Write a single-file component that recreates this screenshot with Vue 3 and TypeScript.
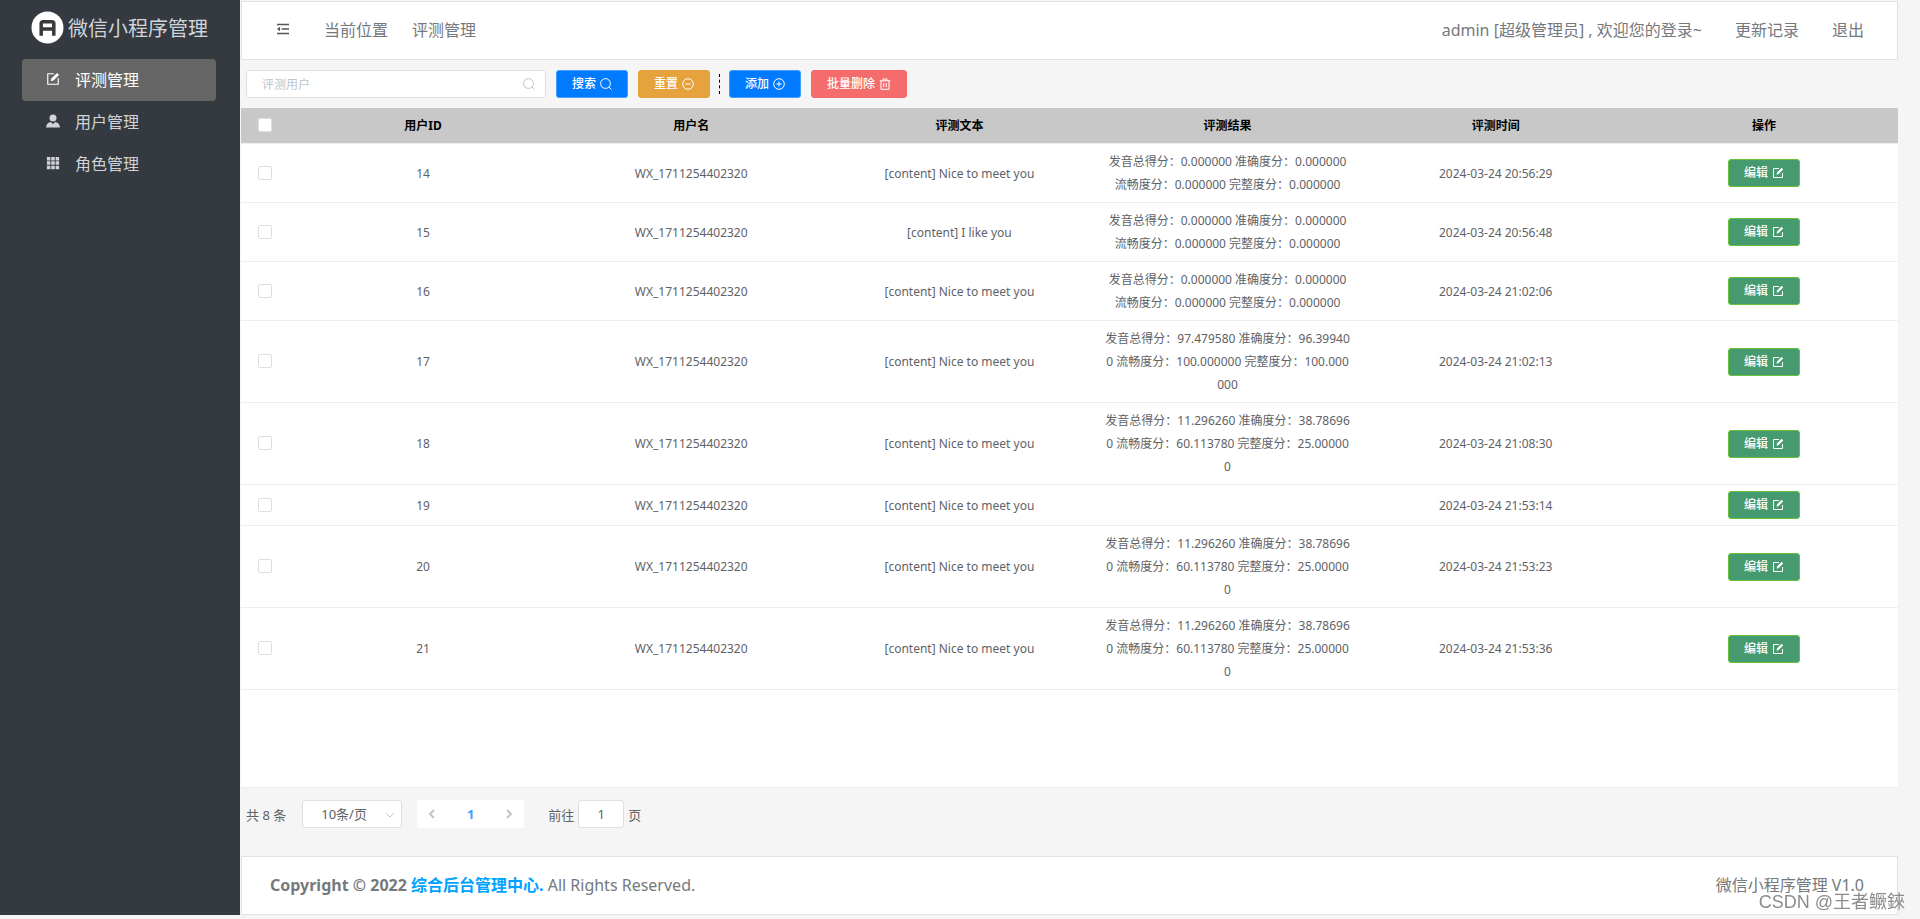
<script setup lang="ts">
import { ref } from 'vue'

interface Row {
  id: number
  text: string
  scores: string[]
  time: string
}

const nice = '[content] Nice to meet you'
const zero = ['0.000000', '0.000000', '0.000000', '0.000000']
const mixed = ['11.296260', '38.786960', '60.113780', '25.000000']

const rows: Row[] = [
  { id: 14, text: nice, scores: zero, time: '2024-03-24 20:56:29' },
  { id: 15, text: '[content] I like you', scores: zero, time: '2024-03-24 20:56:48' },
  { id: 16, text: nice, scores: zero, time: '2024-03-24 21:02:06' },
  { id: 17, text: nice, scores: ['97.479580', '96.399400', '100.000000', '100.000000'], time: '2024-03-24 21:02:13' },
  { id: 18, text: nice, scores: mixed, time: '2024-03-24 21:08:30' },
  { id: 19, text: nice, scores: [], time: '2024-03-24 21:53:14' },
  { id: 20, text: nice, scores: mixed, time: '2024-03-24 21:53:23' },
  { id: 21, text: nice, scores: mixed, time: '2024-03-24 21:53:36' },
]

const labels = ['发音总得分', '准确度分', '流畅度分', '完整度分']
const result = (row: Row): string => row.scores.map((s, i) => `${labels[i]}：${s}`).join(' ')

const columns = ['用户ID', '用户名', '评测文本', '评测结果', '评测时间', '操作']
const menu = [
  { icon: 'edit', label: '评测管理' },
  { icon: 'user', label: '用户管理' },
  { icon: 'grid', label: '角色管理' },
]
const active = ref('评测管理')
const keyword = ref('')
const page = ref('1')
</script>

<template>
  <div class="layout">
    <aside class="sidebar">
      <div class="brand">
        <svg class="logo" viewBox="0 0 34 34" aria-hidden="true">
          <circle cx="17" cy="17" r="16.5" fill="#fff" />
          <path d="M10.5 25.500V13q0-2 2-2h9q2 0 2 2V25.500M10.500 18.500h13" fill="none" stroke="#3a3a3c" stroke-width="3.600" />
        </svg>
        <span>微信小程序管理</span>
      </div>
      <nav class="menu">
        <a v-for="m in menu" :key="m.label" href="#" :class="{ active: active === m.label }" @click.prevent="active = m.label">
          <svg class="menu-icon" viewBox="0 0 16 16" aria-hidden="true">
            <template v-if="m.icon === 'edit'">
              <path d="M9 2H2v12h12V7" fill="none" stroke="currentColor" stroke-width="1.3" />
              <path d="M5.500 10.500l.6-3L12.600 1l2.300 2.300-6.400 6.500z" fill="currentColor" />
            </template>
            <template v-else-if="m.icon === 'user'">
              <circle cx="8" cy="4.500" r="4" fill="currentColor" />
              <path d="M0 15.500q.2-5 5.200-6.500L8 11.500 10.800 9Q15.800 10.500 16 15.500z" fill="currentColor" />
            </template>
            <path v-else d="M1 1h4v4H1zM6 1h4v4H6zM11 1h4v4h-4zM1 6h4v4H1zM6 6h4v4H6zM11 6h4v4h-4zM1 11h4v4H1zM6 11h4v4H6zM11 11h4v4h-4z" fill="currentColor" />
          </svg>
          <span>{{ m.label }}</span>
        </a>
      </nav>
    </aside>

    <main class="content">
      <header class="topbar">
        <button class="fold" type="button" aria-label="折叠菜单">
          <svg viewBox="0 0 14 14" aria-hidden="true">
            <path d="M1 2.500h12M5.500 7H13M1 11.500h12" fill="none" stroke="currentColor" stroke-width="1.600" />
            <path d="M1 7l3-2.200v4.400z" fill="currentColor" />
          </svg>
        </button>
        <a href="#">当前位置</a>
        <a href="#">评测管理</a>
        <div class="account">
          <span>admin [超级管理员] , 欢迎您的登录~</span>
          <a href="#">更新记录</a>
          <a href="#">退出</a>
        </div>
      </header>

      <form class="tools" @submit.prevent>
        <div class="search">
          <input v-model="keyword" type="text" placeholder="评测用户" aria-label="评测用户" />
          <svg class="icon" viewBox="0 0 12 12" aria-hidden="true"><circle cx="5.500" cy="5.500" r="4.900" /><path d="M9 9l2.500 2.500" /></svg>
        </div>
        <button type="submit" class="btn primary">搜索<svg class="icon" viewBox="0 0 12 12" aria-hidden="true"><circle cx="5.500" cy="5.500" r="4.900" /><path d="M9 9l2.500 2.500" /></svg></button>
        <button type="button" class="btn warning">重置<svg class="icon" viewBox="0 0 12 12" aria-hidden="true"><circle cx="6" cy="6" r="5.300" /><path d="M3.500 6h5" /></svg></button>
        <span class="divider"></span>
        <button type="button" class="btn primary">添加<svg class="icon" viewBox="0 0 12 12" aria-hidden="true"><circle cx="6" cy="6" r="5.300" /><path d="M3.500 6h5M6 3.500v5" /></svg></button>
        <button type="button" class="btn danger">批量删除<svg class="icon" viewBox="0 0 12 12" aria-hidden="true"><path d="M.7 2.800h10.600M4 2.800V1h4v1.800M2 2.800v8.500h8V2.800M4.700 5v4M7.300 5v4" /></svg></button>
      </form>

      <div class="table-wrap">
        <table>
          <colgroup>
            <col class="check-col" />
            <col v-for="c in columns" :key="c" />
          </colgroup>
          <thead>
            <tr>
              <th><input type="checkbox" aria-label="全选" /></th>
              <th v-for="c in columns" :key="c" scope="col">{{ c }}</th>
            </tr>
          </thead>
          <tbody>
            <tr v-for="row in rows" :key="row.id">
              <td><input type="checkbox" :aria-label="`选择 ${row.id}`" /></td>
              <td>{{ row.id }}</td>
              <td>WX_1711254402320</td>
              <td>{{ row.text }}</td>
              <td>{{ result(row) }}</td>
              <td>{{ row.time }}</td>
              <td>
                <button type="button" class="btn success">编辑<svg class="icon" viewBox="0 0 12 12" aria-hidden="true"><path d="M7 1.500H1.500v9h9V6" /><path class="solid" d="M4.500 7.700L5 5.500 9.600.8l1.600 1.600-4.600 4.700z" /></svg></button>
              </td>
            </tr>
          </tbody>
        </table>
      </div>

      <div class="pagination">
        <span class="total">共 8 条</span>
        <div class="size">
          <select aria-label="每页条数">
            <option>10条/页</option>
            <option>20条/页</option>
          </select>
          <svg viewBox="0 0 10 10" aria-hidden="true"><path d="M1 3l4 4 4-4" /></svg>
        </div>
        <div class="pager">
          <button type="button" aria-label="上一页" disabled><svg viewBox="0 0 10 10" aria-hidden="true"><path d="M7 1L3 5l4 4" /></svg></button>
          <button type="button" class="current">1</button>
          <button type="button" aria-label="下一页" disabled><svg viewBox="0 0 10 10" aria-hidden="true"><path d="M3 1l4 4-4 4" /></svg></button>
        </div>
        <label class="jump">前往<input v-model="page" type="text" />页</label>
      </div>

      <footer class="footer">
        <span><strong>Copyright © 2022 <a href="#">综合后台管理中心.</a></strong> All Rights Reserved.</span>
        <span>微信小程序管理 V1.0</span>
      </footer>
    </main>

    <div class="watermark">CSDN @王者鳜錸</div>
  </div>
</template>

<style>
body {
  margin: 0;
  background: #f5f5f5;
}
</style>

<style scoped>
* {
  box-sizing: border-box;
}
.layout {
  display: flex;
  min-height: 100vh;
  font-family: "Noto Sans", "Noto Sans CJK SC", sans-serif;
  color: #606266;
}
button,
input,
select {
  font-family: inherit;
  margin: 0;
}
a {
  color: inherit;
  text-decoration: none;
}
.sidebar {
  width: 240px;
  flex: none;
  margin-bottom: 4px;
  background: #343a40;
  color: #d0d4d8;
}
.brand {
  display: flex;
  align-items: center;
  gap: 4px;
  height: 59px;
  padding: 0 0 4px 31px;
  font-size: 20px;
}
.logo {
  width: 33px;
  height: 33px;
}
.menu {
  padding: 0 24px 0 22px;
}
.menu a {
  display: flex;
  align-items: center;
  gap: 15px;
  height: 42px;
  padding: 0 24px 2px;
  border-radius: 4px;
  font-size: 16px;
}
.menu a.active {
  background: #666;
  color: #fff;
}
.menu-icon {
  width: 14px;
  height: 14px;
}
.content {
  flex: 1;
  min-width: 0;
  display: flex;
  flex-direction: column;
  padding: 1px 22px 4px 1px;
}
.topbar,
.footer {
  display: flex;
  align-items: center;
  border: 1px solid #dee2e6;
  background: #fff;
  color: #75797d;
  font-size: 16px;
}
.topbar {
  height: 59px;
  gap: 24px;
  padding: 0 33px 3px 34px;
}
.fold {
  width: 16px;
  height: 24px;
  margin-right: 8px;
  padding: 0;
  border: 0;
  background: none;
  color: #555;
}
.fold svg {
  display: block;
  width: 14px;
  height: 14px;
}
.account {
  display: flex;
  gap: 33px;
  margin-left: auto;
}
.tools {
  display: flex;
  align-items: center;
  gap: 10px;
  padding: 10px 5px;
}
.search {
  position: relative;
  width: 300px;
}
.search input {
  display: block;
  width: 100%;
  height: 28px;
  padding: 0 30px 0 15px;
  border: 1px solid #dcdfe6;
  border-radius: 4px;
  background: #fff;
  color: #606266;
  font-size: 12px;
  outline: none;
}
.search input::placeholder {
  color: #c0c4cc;
}
.search .icon {
  position: absolute;
  right: 11px;
  top: 8px;
  color: #c0c4cc;
}
.icon {
  width: 12px;
  height: 12px;
  fill: none;
  stroke: currentColor;
  stroke-width: 1;
}
.icon .solid {
  fill: currentColor;
  stroke: none;
}
.btn {
  display: inline-flex;
  align-items: center;
  gap: 4px;
  height: 28px;
  padding: 0 15px;
  border: 1px solid;
  border-radius: 3px;
  color: #fff;
  font-size: 12px;
  font-weight: 500;
  line-height: 14px;
  vertical-align: middle;
}
.primary {
  background: #007bff;
  border-color: #409eff;
}
.warning {
  background: #e6a23c;
  border-color: #e6a23c;
}
.danger {
  background: #f56c6c;
  border-color: #f56c6c;
}
.success {
  background: #459a70;
  border-color: #67c23a;
}
.divider {
  height: 20px;
  margin: 0 -1px;
  border-left: 1px dashed #000;
}
.table-wrap {
  flex: 1;
  border-bottom: 1px solid #ebeef5;
  background: #fff;
}
table {
  width: 100%;
  table-layout: fixed;
  border-collapse: separate;
  border-spacing: 0;
  font-size: 12px;
  line-height: 23px;
  text-align: center;
}
.check-col {
  width: 48px;
}
th,
td {
  padding: 6px 10px;
  border-bottom: 1px solid #ebeef5;
  word-break: break-all;
}
th {
  background: #c8c8c8;
  color: #000;
  font-weight: 700;
}
table input {
  appearance: none;
  display: block;
  width: 14px;
  height: 14px;
  margin: 0 auto 1px;
  border: 1px solid #dcdfe6;
  border-radius: 2px;
  background: #fff;
}
table .btn {
  display: flex;
  margin: 0 auto;
}
.pagination {
  display: flex;
  align-items: center;
  height: 68px;
  padding: 0 5px 16px;
  font-size: 13px;
}
.total {
  margin-right: 16px;
}
.size {
  position: relative;
  width: 100px;
  margin-right: 15px;
}
.size select {
  appearance: none;
  display: block;
  width: 100%;
  height: 28px;
  padding: 0 25px 0 18px;
  border: 1px solid #dcdfe6;
  border-radius: 3px;
  background: #fff;
  color: #606266;
  font-size: 13px;
}
.size svg {
  position: absolute;
  right: 7px;
  top: 10px;
}
.pagination svg {
  width: 10px;
  height: 10px;
  fill: none;
  stroke: #c0c4cc;
  stroke-width: 1;
}
.pager {
  display: flex;
  margin-right: 24px;
  background: #fff;
}
.pager svg {
  stroke-width: 2;
}
.pager button {
  width: 30px;
  height: 28px;
  padding: 0;
  border: 0;
  background: none;
  font-size: 13px;
}
.pager .current {
  width: 47px;
  color: #409eff;
  font-weight: 700;
}
.jump {
  display: flex;
  align-items: center;
  gap: 4px;
}
.jump input {
  width: 46px;
  height: 28px;
  padding: 0;
  border: 1px solid #dcdfe6;
  border-radius: 3px;
  background: #fff;
  color: #606266;
  font-size: 13px;
  text-align: center;
}
.footer {
  justify-content: space-between;
  height: 59px;
  padding: 0 33px 3px 28px;
}
.footer a {
  color: #00a2ff;
}
.watermark {
  position: fixed;
  right: 15px;
  bottom: 6px;
  color: #8c8c8c;
  font-family: "Liberation Sans", "Noto Sans CJK SC", sans-serif;
  font-size: 18px;
}
</style>
